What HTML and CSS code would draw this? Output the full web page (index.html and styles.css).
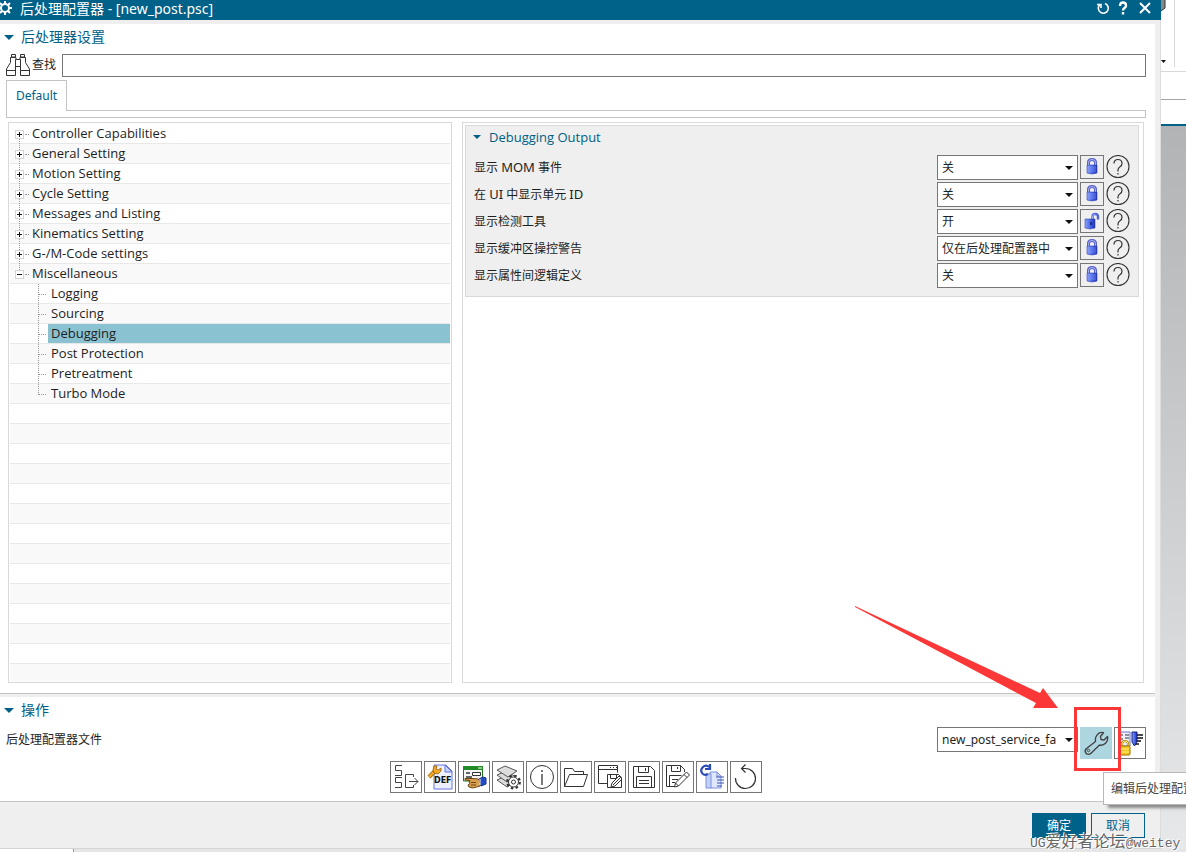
FILE: index.html
```html
<!DOCTYPE html>
<html lang="zh-CN">
<head>
<meta charset="utf-8">
<title>后处理配置器 - [new_post.psc]</title>
<link rel="stylesheet" href="styles.css">
</head>
<body>
<svg class="defs" aria-hidden="true">
  <defs>
    <linearGradient id="blue" x1="0" x2="1" y1="0" y2="0"><stop offset="0" stop-color="#8fa6f8"/><stop offset=".45" stop-color="#4f6ff0"/><stop offset="1" stop-color="#1c2fb0"/></linearGradient>
    <symbol id="lock" viewBox="0 0 16 18">
      <path d="M4.500 8V4.500q0-3 3.500-3t3.500 3V8" fill="none" stroke="#5560c8" stroke-width="3"/>
      <path d="M4.500 8V4.500q0-3 3.500-3t3.500 3V8" fill="none" stroke="#aeb8f2" stroke-width="1"/>
      <path d="M3 7h10v8q-5 2-10 0z" fill="url(#blue)" stroke="#3a45b5" stroke-width=".6"/>
      <path d="M4 9h8M4 11h8M4 13h8" stroke="#8da0f8" stroke-width=".6"/>
    </symbol>
    <symbol id="unlock" viewBox="0 0 16 18">
      <path d="M8.500 8V5q0-3 2.800-3T14 5v2.500" fill="none" stroke="#4a5fd8" stroke-width="2.400"/>
      <path d="M8.500 7V5q0-3 2.800-3" fill="none" stroke="#bcc7fa" stroke-width=".8"/>
      <path d="M1 7l10 0v9l-5 1-5-1z" fill="url(#blue)" stroke="#3a45b5" stroke-width=".6"/>
      <path d="M7 10v3" stroke="#141c70" stroke-width="1.500"/>
    </symbol>
    <symbol id="help" viewBox="0 0 24 24">
      <circle cx="12" cy="11.500" r="11" fill="none" stroke="#333" stroke-width="1.100"/>
      <path d="M8 8.500q0-4 4-4t4 4q0 2-2 3.200T12 15v1.500M12 18v1.500" fill="none" stroke="#333" stroke-width="1.200"/>
    </symbol>
  </defs>
</svg>
<div class="screen">
  <div class="workspace">
    <main class="dialog">
      <header class="titlebar">
        <svg class="gear" viewBox="0 0 14 14"><g fill="none" stroke="#fff"><circle cx="5" cy="7" r="4" stroke-width="2"/><path d="M5 0v3M5 11v3M-2 7h3M9 7h3M0 2l2 2M10 2L8 4M0 12l2-2M10 12l-2-2" stroke-width="2"/></g></svg>
        <h1>后处理配置器 - [new_post.psc]</h1>
        <button class="title-btn" aria-label="重置"><svg viewBox="0 0 14 14"><path d="M9 2.500A5 5 0 1 1 3.500 4M1 3.500h4V7" fill="none" stroke="#fff" stroke-width="1.600"/></svg></button>
        <button class="title-btn" aria-label="帮助"><svg viewBox="0 0 14 14"><path d="M4 5q0-3.500 3-3.500T10 4.500Q10 6 8.500 7T7 9.500M7 11v2.500" fill="none" stroke="#fff" stroke-width="2.400"/></svg></button>
        <button class="title-btn close" aria-label="关闭"><svg viewBox="0 0 14 14"><path d="M2 2l10 10M12 2L2 12" stroke="#fff" stroke-width="2"/></svg></button>
      </header>

      <section class="panel settings">
        <h2 class="heading">后处理器设置</h2>
        <div class="search">
          <svg class="binoculars" viewBox="0 0 24 24"><path d="M5.500 1.500h4V4h-4zM14.500 1.500h4V4h-4zM4.500 4.500h5.500v2M14 6.500v-2h5.500M4.500 4.500v5L.5 16v6.500H9.500v-16h5v16h9V16l-4-6.500v-5M.5 17.500h9M14.500 17.500h9M9.500 13.500h5" fill="none" stroke="#333"/></svg>
          <label for="find">查找</label>
          <input id="find" type="text">
        </div>
        <div class="tabs"><button class="tab">Default</button></div>
        <div class="tab-base"></div>
        <div class="columns">
          <ul class="tree">
            <li><div class="row"><button class="toggle" aria-label="展开"></button><span>Controller Capabilities</span></div></li>
            <li><div class="row"><button class="toggle" aria-label="展开"></button><span>General Setting</span></div></li>
            <li><div class="row"><button class="toggle" aria-label="展开"></button><span>Motion Setting</span></div></li>
            <li><div class="row"><button class="toggle" aria-label="展开"></button><span>Cycle Setting</span></div></li>
            <li><div class="row"><button class="toggle" aria-label="展开"></button><span>Messages and Listing</span></div></li>
            <li><div class="row"><button class="toggle" aria-label="展开"></button><span>Kinematics Setting</span></div></li>
            <li><div class="row"><button class="toggle" aria-label="展开"></button><span>G-/M-Code settings</span></div></li>
            <li><div class="row last"><button class="toggle open" aria-label="折叠"></button><span>Miscellaneous</span></div>
              <ul class="branch">
                <li class="leaf"><span>Logging</span></li>
                <li class="leaf"><span>Sourcing</span></li>
                <li class="leaf selected"><span>Debugging</span></li>
                <li class="leaf"><span>Post Protection</span></li>
                <li class="leaf"><span>Pretreatment</span></li>
                <li class="leaf"><span>Turbo Mode</span></li>
              </ul>
            </li>
          </ul>
          <div class="detail">
            <div class="group">
              <h3 class="heading small">Debugging Output</h3>
              <div class="field"><label for="s1">显示 <span class="latin">MOM</span> 事件</label><span class="drop"><select id="s1"><option>关</option></select></span><button class="lock" aria-label="锁定"><svg class="lock-icon"><use href="#lock"/></svg></button><button class="help" aria-label="帮助"><svg><use href="#help"/></svg></button></div>
              <div class="field"><label for="s2">在 <span class="latin">UI</span> 中显示单元 <span class="latin">ID</span></label><span class="drop"><select id="s2"><option>关</option></select></span><button class="lock" aria-label="锁定"><svg class="lock-icon"><use href="#lock"/></svg></button><button class="help" aria-label="帮助"><svg><use href="#help"/></svg></button></div>
              <div class="field"><label for="s3">显示检测工具</label><span class="drop"><select id="s3"><option>开</option></select></span><button class="lock" aria-label="解锁"><svg class="lock-icon"><use href="#unlock"/></svg></button><button class="help" aria-label="帮助"><svg><use href="#help"/></svg></button></div>
              <div class="field"><label for="s4">显示缓冲区操控警告</label><span class="drop"><select id="s4"><option>仅在后处理配置器中</option></select></span><button class="lock" aria-label="锁定"><svg class="lock-icon"><use href="#lock"/></svg></button><button class="help" aria-label="帮助"><svg><use href="#help"/></svg></button></div>
              <div class="field"><label for="s5">显示属性间逻辑定义</label><span class="drop"><select id="s5"><option>关</option></select></span><button class="lock" aria-label="锁定"><svg class="lock-icon"><use href="#lock"/></svg></button><button class="help" aria-label="帮助"><svg><use href="#help"/></svg></button></div>
            </div>
          </div>
        </div>
      </section>

      <section class="panel actions">
        <h2 class="heading">操作</h2>
        <div class="file-row">
          <label for="file">后处理配置器文件</label>
          <span class="drop"><select id="file"><option>new_post_service_fa</option></select></span>
          <button class="tool edit" aria-label="编辑后处理配置器文件"><svg viewBox="0 0 32 32"><path d="M15.500 14.500q-.8-5 2.800-7.800 3-2 5.200-1L20.500 9.500l.5 3 3 .5 3.500-3.500q.8 4-2 6.800-2.500 2.500-6 1.700l-9 8.700q-2.500 1.600-4.500-.5-1.800-2.200.2-4.400z" fill="none" stroke="#444" stroke-width="1.400" stroke-linejoin="round"/><circle cx="8.500" cy="23.500" r="1.200" fill="none" stroke="#444"/></svg></button>
          <button class="tool" aria-label="加密文件"><svg viewBox="0 0 30 30"><path d="M4 4h11v14H4z" fill="#eef1ff" stroke="#6973d8"/><path d="M6 7h2M6 11h2M10 7h4M10 10h4" stroke="#333"/><path d="M17 4h5v10l-2.500 4L17 14z" fill="url(#blue)" stroke="#15207a"/><path d="M22 7h6M22 10h6M22 13h4M21 16h3" stroke="#111" stroke-width="1.400"/><path d="M7 19v-3q0-3 3-3t3 3v3" fill="none" stroke="#a88208" stroke-width="2.200"/><path d="M7 19v-3q0-3 3-3t3 3v3" fill="none" stroke="#ffe46a"/><rect x="5" y="18" width="10" height="9" rx="1" fill="#f5c81e" stroke="#9d7405"/><path d="M6 21h8M6 24h8" stroke="#fff08a"/></svg></button>
        </div>
        <div class="toolbar">
          <button class="tool" aria-label="导出"><svg viewBox="0 0 30 30" fill="none" stroke="#444"><path d="M11 3.500H4.500v5h6v5H4M11 15.500H4.500v5h6v5H4M22.500 15v-2.500h-8v13h8V23M18 19.500h9M23.500 16l3.500 3.500-3.500 3.500"/></svg></button>
          <button class="tool" aria-label="编辑 DEF"><svg viewBox="0 0 30 30"><path d="M9 3h12l6 6v18H9z" fill="#edf1ff" stroke="#6977e0"/><path d="M20 3v7h7z" fill="#c7d4ff" stroke="#6977e0"/><path d="M4 15l6-6" stroke="#94600a" stroke-width="4"/><path d="M4 15l6-6" stroke="#f4aa24" stroke-width="2.500"/><path d="M8 8l1-4 3 0-1 3 2 1 3-2v3l-3 3-4-1z" fill="#f4aa24" stroke="#94600a" stroke-width=".8"/><text class="def-text" x="9" y="21">DEF</text></svg></button>
          <button class="tool" aria-label="选择对话框"><svg viewBox="0 0 30 30"><path d="M4.500 5h19v14h-19z" fill="#f5f5f5" stroke="#17751c"/><path d="M4 4h20v4H4z" fill="#218b25"/><path d="M19 6h4" stroke="#fff"/><path d="M7 11h4M7 15h6" stroke="#333" stroke-width="1.500"/><path d="M13.500 10.500h8v3h-8z" fill="#fff" stroke="#333"/><path d="M6 16.500h7l6 .5 3 2-1 5-7 2-4-1-1-2 2-1.500-1-1.500 1-1.500-5-.5z" fill="#d9a052" stroke="#6f4310"/><path d="M12 20.500h5M12 23h5" stroke="#6f4310"/><path d="M20 17l4-2 3 1v6l-5 2z" fill="#244cc5" stroke="#14308b"/><path d="M21 17v6" stroke="#fff"/></svg></button>
          <button class="tool" aria-label="图层设置"><svg viewBox="0 0 30 30"><g fill="#ddd" stroke="#555"><path d="M4 18l10 7 9-5-10-6z"/><path d="M4 13l10 7 9-5-10-6z"/><path d="M4 8l8-4 12 5-9 6z"/></g><g fill="none" stroke="#333"><circle cx="20.500" cy="20" r="6.300" stroke-width="2.200" stroke-dasharray="2.470 2.470"/><circle cx="20.500" cy="20" r="5" fill="#fff"/><circle cx="20.500" cy="20" r="2"/></g></svg></button>
          <button class="tool" aria-label="信息"><svg viewBox="0 0 30 30" fill="none" stroke="#333"><circle cx="15" cy="15" r="11.500"/><path d="M15 12v11M15 8v2" stroke-width="1.300"/></svg></button>
          <button class="tool" aria-label="打开"><svg viewBox="0 0 30 30" fill="none" stroke="#333"><path d="M3.500 24.500v-18h8l2 3h9v3M3.500 24.500l5-12h18l-4 12z"/></svg></button>
          <button class="tool" aria-label="编辑界面"><svg viewBox="0 0 30 30" fill="none" stroke="#333"><path d="M12 21.500H3.500v-18h19v7M3.500 7.500h19M15 5.500h1M18 5.500h1M21 5.500h1M12.500 12.500h11l3 3v10h-14zM15.500 12.500v4h6v-4"/><path d="M17 21l7-7 3 3-7 7-4 1z" fill="#fff"/><path d="M18 23l7-7"/></svg></button>
          <button class="tool" aria-label="保存"><svg viewBox="0 0 30 30" fill="none" stroke="#333"><path d="M4.500 4.500h17l4 4v17h-21zM9.500 4.500v6h10v-6M16.500 6v3M7.500 25.500v-11h15v11M10 18.500h10M10 21.500h10"/></svg></button>
          <button class="tool" aria-label="另存为"><svg viewBox="0 0 30 30" fill="none" stroke="#333"><path d="M11 24.500H3.500v-21h14l4 4V10M8.500 3.500v6h9v-6M14.500 5v2M6.500 24.500v-11h12M9 17.500h6M9 20.500h3"/><path d="M23.500 10l3 3-11 11-4 1 1-4zM21 12.500l3 3M12.500 21l3 3" fill="#fff"/></svg></button>
          <button class="tool" aria-label="转换"><svg viewBox="0 0 30 30"><path d="M13 10h7l4 4v12H13z" fill="#dfe7ff" stroke="#7d90dd"/><path d="M9 12h5v14H9z" fill="#c3d0fa" stroke="#7d90dd"/><path d="M20 10v4h4" fill="none" stroke="#7d90dd"/><path d="M12 5Q9 2 6 5t-1 6q2 3 6 1M13 2v5H8" fill="none" stroke="#294bb8" stroke-width="2.200"/><path d="M19 15h8M20 18h7M20 21h7M20 24h5" stroke="#3851aa"/></svg></button>
          <button class="tool" aria-label="撤销"><svg viewBox="0 0 30 30" fill="none" stroke="#333" stroke-width="1.200"><path d="M4.500 16A10 10 0 1 0 14.500 6.500h-4M14.500 2.500l-4 4 4 4"/></svg></button>
        </div>
      </section>

      <footer class="footer">
        <button class="btn primary">确定</button>
        <button class="btn">取消</button>
      </footer>
    </main>
    <aside class="backdrop">
      <svg class="ribbon" viewBox="0 0 25 124"><path d="M0 0h4v8l-4 3z" fill="#888"/><path d="M4 0v8l-4 3" fill="none" stroke="#333"/><path d="M13.500 0v67M0 71.500h25" stroke="#d8d8d8"/><path d="M0 99.500h25" stroke="#a5a5a5"/><path d="M0 60h5l-2.500 3z" fill="#111"/></svg>
      <div class="viewport"></div>
    </aside>
  </div>
  <div class="status"><span class="status-cell"></span></div>

  <svg class="arrow" viewBox="0 0 204 103"><path d="M0 0L185 87l3-5 15 20h-25l3-5L0 1z" fill="#fb3837"/></svg>
  <div class="marker"></div>
  <div class="tooltip" role="tooltip">编辑后处理配置器文件</div>
  <div class="watermark"><span class="mark-latin">UG</span>爱好者论坛<span class="mark-latin">@weitey</span></div>
</div>
</body>
</html>
```
FILE: styles.css
```css
* { box-sizing: border-box; }

body {
  margin: 0;
  font: 12px/20px "Noto Sans", "Noto Sans CJK SC", sans-serif;
  color: #1e1e1e;
}

button, input, select { font: inherit; color: inherit; border-radius: 0; margin: 0; padding: 0; }
button { display: flex; align-items: center; justify-content: center; background: none; border: 0; }
h1, h2, h3, ul { margin: 0; padding: 0; font-weight: 400; list-style: none; }
svg { display: block; flex: none; }
.defs { position: absolute; width: 0; height: 0; }

.screen { position: relative; display: flex; flex-direction: column; height: 100vh; overflow: hidden; }
.workspace { display: flex; flex: 1; min-height: 0; }
.dialog { display: flex; flex-direction: column; flex: 1; min-width: 0; background: #efefef; border-right: 1px solid #dcdcdc; border-bottom: 1px solid #d4d4d4; }

.titlebar { display: flex; align-items: center; height: 20px; padding-right: 6px; background: #006189; color: #fff; margin-right: -1px; }
.titlebar h1 { flex: 1; font-size: 14px; line-height: 18px; height: 20px; }
.gear { width: 14px; height: 14px; margin: 0 6px 4px 0; }
.title-btn { width: 20px; height: 16px; margin-bottom: 4px; }
.title-btn svg { width: 14px; height: 14px; }
.close { margin-left: 2px; }

.panel { display: flex; flex-direction: column; margin-right: 5px; background: #fff; border-bottom: 1px solid #c4c4c4; }
.settings { flex: 1; min-height: 0; margin-top: 4px; padding-bottom: 10px; }
.actions { margin-top: 3px; padding-bottom: 8px; }

.heading { display: flex; align-items: center; height: 26px; padding-left: 4px; font-size: 14px; color: #005f87; }
.heading::before { content: ""; margin-right: 7px; border: 5px solid transparent; border-top-color: #005f87; border-bottom: 0; }
.heading.small { height: 22px; padding: 0 0 0 7px; font: 13px/20px "Open Sans", sans-serif; }
.heading.small::before { margin-right: 8px; border-width: 4px; border-bottom: 0; }

.search { display: flex; align-items: center; margin: 3px 9px 3px 6px; }
.binoculars { width: 24px; height: 24px; margin-right: 2px; }
.search input { flex: 1; height: 23px; margin-left: 6px; border: 1px solid #767676; }

.tabs { display: flex; margin: 0 9px 0 6px; }
.tabs::after { content: ""; flex: 1; border-bottom: 1px solid #c4c4c4; }
.tab { width: 61px; height: 31px; border: solid #c4c4c4; border-width: 1px 1px 0; color: #005f87; }
.tab-base { height: 7px; margin: 0 9px 4px 6px; border: solid #c4c4c4; border-width: 0 1px 1px; }

.columns { display: grid; grid-template-columns: 444fr 682fr; gap: 10px; flex: 1; min-height: 0; margin: 0 11px 0 8px; }
.tree, .detail { border: 1px solid #d9d9d9; padding: 1px; min-width: 0; overflow: hidden; }
.tree {
  font-family: "Open Sans", sans-serif;
  font-size: 13px;
  background: repeating-linear-gradient(#fff 0 19px, #e8e8e8 19px 20px, #f9f9f9 20px 39px, #e8e8e8 39px 40px) content-box;
}
.row { position: relative; display: flex; align-items: center; height: 20px; padding: 0 0 1px 5px; }
.row span { line-height: 19px; }
.row::before { content: ""; position: absolute; left: 9px; top: 14px; height: 12px; border-left: 1px dotted #999; }
.row.last::before { display: none; }
.row::after { content: ""; position: absolute; left: 15px; top: 10px; width: 4px; border-top: 1px dotted #999; }
.toggle { position: relative; width: 9px; height: 9px; margin: 2px 8px 0 0; border: 1px solid #d4d4d4; background: linear-gradient(#111, #111) center / 5px 1px no-repeat, linear-gradient(#111, #111) center / 1px 5px no-repeat, #fff; }
.toggle.open { background: linear-gradient(#111, #111) center / 5px 1px no-repeat, #fff; }
.branch { position: relative; padding-left: 28px; }
.branch::before { content: ""; position: absolute; left: 28px; top: 0; bottom: 9px; border-left: 1px dotted #999; }
.leaf { display: flex; align-items: center; height: 20px; padding-bottom: 1px; }
.leaf::before { content: ""; width: 8px; margin: 2px 2px 0 0; border-top: 1px dotted #999; }
.leaf span { flex: 1; height: 19px; line-height: 19px; padding-left: 3px; }
.leaf.selected span { background: #8bc2d1; }

.detail { padding: 2px 4px 2px 2px; }
.group { padding: 0 8px 8px; border: 1px solid #d9d9d9; background: #efefef; }
.group .heading { margin: 0 -8px 7px; }
.field { display: flex; align-items: flex-start; gap: 2px; height: 25px; }
.field + .field { margin-top: 2px; }
.field label, .file-row label { flex: 1; line-height: 25px; }
.latin { font-size: 13px; }
.drop { position: relative; flex: none; width: 141px; height: 25px; }
.drop::after { content: ""; position: absolute; right: 5px; top: 11px; border: 4px solid transparent; border-top-color: #111; border-bottom: 0; }
.drop select { appearance: none; width: 100%; height: 100%; padding: 0 16px 0 4px; border: 1px solid #767676; background: #fff; }
.lock { width: 24px; height: 24px; border: 1px solid #767676; }
.lock-icon { width: 16px; height: 18px; }
.help, .help svg { width: 24px; height: 24px; }

.file-row { display: flex; gap: 2px; margin: 4px 9px 2px 6px; }
.toolbar { display: flex; justify-content: center; gap: 2px; padding-right: 3px; }
.tool { flex: none; width: 32px; height: 32px; border: 1px solid #767676; background: #fff; }
.tool svg { width: 30px; height: 30px; }
.tool.edit { border: 0; background: #aed6e1; }
.tool.edit svg { width: 32px; height: 32px; }
.def-text { font: bold 8px "DejaVu Sans", sans-serif; fill: #111; }

.footer { display: flex; justify-content: flex-end; gap: 5px; padding: 11px 15px 10px; }
.btn { width: 54px; height: 25px; border: 1px solid #006189; background: #efefef; color: #006189; }
.btn.primary { background: #006189; color: #fff; }

.backdrop { display: flex; flex-direction: column; width: 25px; background: #fff; }
.ribbon { width: 25px; height: 124px; }
.viewport { flex: 1; border-top: 2px solid #006189; background: linear-gradient(#b2b3b5, #e6e8ea); }
.status { display: flex; height: 3px; background: #e6e6e6; }
.status-cell { width: 74px; background: #fff; border-right: 1px solid #999; }

.arrow { position: absolute; left: 855px; top: 606px; width: 204px; height: 103px; }
.marker { position: absolute; left: 1074px; top: 707px; width: 47px; height: 64px; border: 3px solid #fb3837; }
.tooltip { position: absolute; left: 1103px; top: 772px; height: 33px; padding: 0 7px; border: 1px solid #b8b8b8; background: #fff; line-height: 31px; white-space: nowrap; color: #444; box-shadow: 4px 4px 3px -1px #888; }
.watermark { position: absolute; left: 1030px; top: 831px; font-size: 16px; white-space: nowrap; color: #666; text-shadow: 1px 1px 0 #fff, -1px -1px 0 #fff; }
.mark-latin { font-family: "Liberation Mono", monospace; font-size: 13px; }
```
